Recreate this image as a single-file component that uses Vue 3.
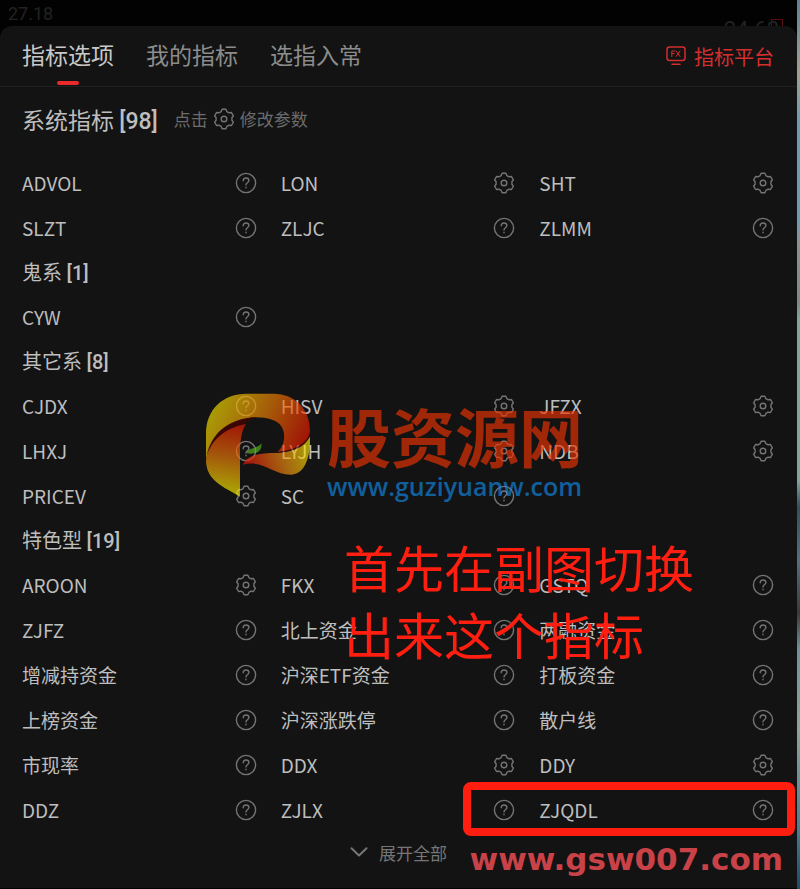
<template>
  <div class="page">
    <div class="screen">
      <div class="backdrop">
        <span class="price-left">27.18</span>
        <span class="price-right">24.62</span>
        <span class="mark"></span>
      </div>

      <main class="panel">
        <header class="header">
          <nav class="tabs">
            <button
              v-for="tab in tabs"
              :key="tab"
              type="button"
              :class="['tab', { active: tab === activeTab }]"
              @click="activeTab = tab"
            >{{ tab }}</button>
          </nav>
          <a class="platform" href="#">
            <svg width="20" height="20" viewBox="0 0 20 20" fill="none" stroke="currentColor" stroke-width="1.5" stroke-linecap="round" stroke-linejoin="round">
              <rect x="1" y="1" width="18" height="13.5" rx="2.5" />
              <path d="M6 18.2h8" />
              <path d="M5.8 10.5V5H8.6M5.8 7.6h2.4M10 5l4 5.500M14 5l-4 5.500" stroke-width="1" />
            </svg>
            指标平台
          </a>
        </header>

        <div class="title">
          <h1>系统指标 <b>[98]</b></h1>
          <p class="hint">
            点击
            <svg class="icon" viewBox="0 0 22 22"><path :d="gear" /><circle cx="11" cy="11" r="2.8" /></svg>
            修改参数
          </p>
        </div>

        <section v-for="group in groups" :key="group.name">
          <h2 v-if="group.name">{{ group.name }} <b>[{{ group.count }}]</b></h2>
          <ul class="grid">
            <li v-for="[name, type] in group.items" :key="name" :class="['cell', { marked: name === 'ZJQDL' }]">
              <a class="name" href="#">{{ name }}</a>
              <button type="button" class="icon-btn" :aria-label="name + (type === 'set' ? ' 设置' : ' 说明')">
                <svg v-if="type === 'set'" class="icon" viewBox="0 0 22 22">
                  <path :d="gear" /><circle cx="11" cy="11" r="2.8" />
                </svg>
                <svg v-else class="icon" viewBox="0 0 22 22">
                  <circle cx="11" cy="11" r="9.6" />
                  <path d="M8.200 8.800C8.200 7 9.400 6 11 6s2.900 1 2.900 2.600c0 2-2.900 2.300-2.900 4.300M11 15.200v.6" />
                </svg>
              </button>
            </li>
          </ul>
        </section>

        <button type="button" class="expand">
          <svg width="18" height="10" viewBox="0 0 18 10" fill="none" stroke="currentColor" stroke-width="2" stroke-linecap="round" stroke-linejoin="round">
            <path d="M1.500 1.200L9 8.500l7.500-7.300" />
          </svg>
          展开全部
        </button>
      </main>
    </div>
    <div class="wallpaper"></div>

    <div class="brand">
      <svg class="logo" viewBox="48 38 312 310">
        <defs>
          <linearGradient id="top" x1="0" y1="0.300" x2="1" y2="0.600">
            <stop offset="0" stop-color="#fbec00" />
            <stop offset="0.500" stop-color="#f58a04" />
            <stop offset="1" stop-color="#ec1400" />
          </linearGradient>
          <linearGradient id="stem" x1="0.600" y1="0" x2="0.500" y2="1">
            <stop offset="0" stop-color="#ec1c00" />
            <stop offset="0.450" stop-color="#f27a08" />
            <stop offset="0.900" stop-color="#fbec00" />
          </linearGradient>
          <linearGradient id="tail" x1="0" y1="0.500" x2="1" y2="0.300">
            <stop offset="0" stop-color="#f01408" />
            <stop offset="0.550" stop-color="#f59010" />
            <stop offset="1" stop-color="#fbec00" />
          </linearGradient>
        </defs>
        <path fill="url(#top)" d="M48 238V160C48 85 100 39 170 39H250C318 39 360 88 360 150C360 188 320 212 262 214C284 196 288 160 275 138C262 118 232 110 198 110C125 112 66 158 48 238Z" />
        <path fill="#500000" d="M50 225C66 152 122 112 200 110C180 116 166 124 160 136C110 142 66 182 50 225Z" />
        <path fill="url(#stem)" d="M48 238C56 188 98 142 168 130C154 150 150 185 150 215V348C100 318 48 300 48 238Z" />
        <path fill="#500000" d="M255 214C315 210 348 190 360 158V176C335 205 305 216 255 217Z" />
        <path fill="url(#tail)" d="M159 252C172 222 205 217 262 217C315 213 345 196 360 168C362 235 342 280 305 282C250 284 220 236 159 252Z" />
        <path fill="#58b820" d="M170 218C174 198 202 206 214 188C217 214 196 222 170 218Z" />
      </svg>
      <div class="brand-text">
        <strong>股资源网</strong>
        <span>www.guziyuanw.com</span>
      </div>
    </div>

    <p class="note">首先在副图切换<br>出来这个指标</p>
    <p class="site">www.gsw007.com</p>
  </div>
</template>

<script setup>
import { ref } from 'vue'

const tabs = ['指标选项', '我的指标', '选指入常']
const activeTab = ref(tabs[0])

// set: 可修改参数, help: 仅说明
const groups = [
  {
    name: '',
    items: [
      ['ADVOL', 'help'], ['LON', 'set'], ['SHT', 'set'],
      ['SLZT', 'help'], ['ZLJC', 'help'], ['ZLMM', 'help']
    ]
  },
  { name: '鬼系', count: 1, items: [['CYW', 'help']] },
  {
    name: '其它系',
    count: 8,
    items: [
      ['CJDX', 'help'], ['HISV', 'set'], ['JFZX', 'set'],
      ['LHXJ', 'help'], ['LYJH', 'set'], ['NDB', 'set'],
      ['PRICEV', 'set'], ['SC', 'help']
    ]
  },
  {
    name: '特色型',
    count: 19,
    items: [
      ['AROON', 'set'], ['FKX', 'help'], ['GSTQ', 'help'],
      ['ZJFZ', 'help'], ['北上资金', 'help'], ['两融资金', 'help'],
      ['增减持资金', 'help'], ['沪深ETF资金', 'help'], ['打板资金', 'help'],
      ['上榜资金', 'help'], ['沪深涨跌停', 'help'], ['散户线', 'help'],
      ['市现率', 'help'], ['DDX', 'set'], ['DDY', 'set'],
      ['DDZ', 'help'], ['ZJLX', 'help'], ['ZJQDL', 'help']
    ]
  }
]

// 六齿齿轮轮廓
function gearPath() {
  const pts = []
  for (let i = 0; i < 6; i++) {
    const base = i * 60 - 90
    for (const [deg, r] of [[-21, 8], [-11, 9.9], [11, 9.9], [21, 8]]) {
      const a = (base + deg) * Math.PI / 180
      pts.push((11 + r * Math.cos(a)).toFixed(2) + ' ' + (11 + r * Math.sin(a)).toFixed(2))
    }
  }
  return 'M' + pts.join('L') + 'Z'
}
const gear = gearPath()
</script>

<style>
body { margin: 0; background: #000; }
</style>

<style scoped>
.page {
  position: relative; display: flex; min-height: 100vh; overflow: hidden;
  font-family: "Noto Sans CJK SC", sans-serif; color: #bebebe;
}
.screen { flex: 1; display: flex; flex-direction: column; background: #020202; padding-bottom: 1px; }
.wallpaper {
  width: 3px;
  background: linear-gradient(#5c8296 0, #a0a090 8%, #6a9db2 14%, #6a9db2 25%, #8b9292 27%, #808888 34%, #7fa79e 36%, #7fa79e 54%, #34505f 57%, #547080 63%, #3c3a38 69%, #6f939a 73%, #8fa398 82%, #4e7d92 93%, #174e68 100%);
}
button { border: 0; padding: 0; background: none; font: inherit; color: inherit; cursor: pointer; }
a { color: inherit; text-decoration: none; }
h1, h2, p, ul { margin: 0; padding: 0; }
b { font-family: Roboto, sans-serif; font-weight: 500; }

.backdrop {
  display: flex; height: 26px; overflow: hidden;
  font: 18px/28px Roboto, sans-serif; color: #222;
}
.price-left { padding-left: 8px; }
.price-right { margin-left: auto; padding-top: 16px; font-size: 22px; }
.mark { width: 10px; height: 12px; margin: 19px 14px 0 -8px; border: 1px solid #5a0c0c; }

.panel {
  flex: 1; display: flex; flex-direction: column;
  background: #131313; border-radius: 12px 12px 0 0;
}
.header {
  display: flex; justify-content: space-between; align-items: center;
  height: 60px; padding: 0 23px 0 22px; border-bottom: 1px solid #202020;
}
.tabs { display: flex; gap: 32px; height: 60px; }
.tab { position: relative; padding-bottom: 4px; font-size: 23px; color: #8c8c8c; }
.tab.active { color: #c8c8c8; }
.tab.active::after {
  content: ''; position: absolute; left: 50%; bottom: 1px;
  width: 22px; height: 4px; margin-left: -11px; border-radius: 2px; background: #e82a2a;
}
.platform { display: flex; align-items: center; gap: 8px; font-size: 20px; color: #d42e2e; }
.title { display: flex; align-items: center; gap: 16px; height: 63px; padding: 0 22px; margin-bottom: 10px; }
h1 { font-size: 23px; font-weight: 400; }
h2 { height: 44px; padding: 0 22px; font-size: 20px; line-height: 44px; font-weight: 400; }
.hint { display: flex; align-items: center; gap: 5px; font-size: 17px; color: #6c6c6c; }
.icon {
  display: block; width: 22px; height: 22px; fill: none;
  stroke: #747474; stroke-width: 1.4; stroke-linecap: round; stroke-linejoin: round;
}
.grid {
  display: grid; grid-template-columns: repeat(3, 1fr); column-gap: 24px;
  padding: 0 23px 0 22px; list-style: none;
}
.cell {
  position: relative; display: flex; justify-content: space-between; align-items: center;
  height: 45px; font-size: 19px;
}
.name { padding-bottom: 1px; }
.marked::after {
  content: ''; position: absolute; top: -5px; right: -21px; bottom: -4px; left: -76px;
  border: 8px solid #ff1e10; border-radius: 8px; pointer-events: none;
}
.expand {
  display: flex; justify-content: center; align-items: center; gap: 11px;
  height: 40px; font-size: 17px; color: #767676;
}

.brand {
  position: absolute; left: 206px; top: 393px; display: flex; gap: 17px;
  opacity: 0.65; pointer-events: none;
}
.logo { width: 104px; height: 104px; }
.brand-text { display: flex; flex-direction: column; padding-top: 5px; }
.brand-text strong { font-size: 64px; line-height: 72px; font-weight: 700; color: #ec3302; }
.brand-text span { font: 600 25px/32px "Open Sans", sans-serif; color: #1188e4; }
.note {
  position: absolute; left: 344px; top: 533px; font-size: 50px; line-height: 67px;
  color: #ff1e10; white-space: nowrap; pointer-events: none;
}
.site {
  position: absolute; right: 17px; bottom: 12px; font: 700 31px/36px "DejaVu Sans", sans-serif;
  color: #c84248; pointer-events: none;
}
</style>
